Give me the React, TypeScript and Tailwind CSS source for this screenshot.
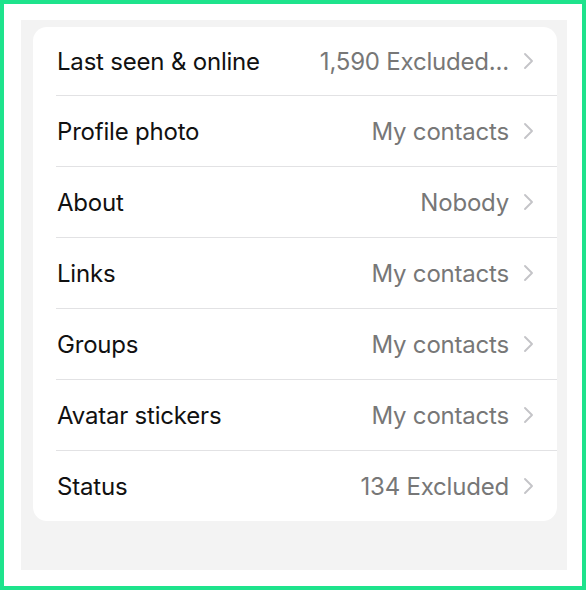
const rows: { label: string; value: string }[] = [
  { label: "Last seen & online", value: "1,590 Excluded..." },
  { label: "Profile photo", value: "My contacts" },
  { label: "About", value: "Nobody" },
  { label: "Links", value: "My contacts" },
  { label: "Groups", value: "My contacts" },
  { label: "Avatar stickers", value: "My contacts" },
  { label: "Status", value: "134 Excluded" },
];

function Chevron() {
  return (
    <svg width="12" height="18" viewBox="0 0 12 18" fill="none" className="shrink-0">
      <path d="M3 2 L10 9 L3 16" stroke="#c4c4c8" strokeWidth="1.9" strokeLinecap="round" strokeLinejoin="round" />
    </svg>
  );
}

export default function App() {
  return (
    <div className="w-[588px] h-[592px] bg-white">
      <div className="w-[586px] h-[590px] border-4 border-[#1ee38c] bg-white pt-[16px] pl-[17px]">
        <div className="w-[546px] h-[550px] bg-[#f3f3f3] pt-[7px] pl-[12px]">
          <div
            className="w-[524px] bg-white rounded-[14px] overflow-hidden"
            style={{ fontFamily: "Inter, 'Noto Sans', sans-serif" }}
          >
            {rows.map((r, i) => (
              <div key={r.label} className="pl-[23px]">
                <div
                  className={
                    "flex items-center justify-between pr-[23px] " +
                    (i === 0 ? "h-[69px] " : i === rows.length - 1 ? "h-[70px] " : "h-[71px] ") +
                    (i < rows.length - 1 ? "border-b border-[#e2e2e4]" : "")
                  }
                >
                  <span className="text-[24px] text-[#111111] tracking-[-0.2px] pl-[1px] pt-[1px]">{r.label}</span>
                  <span className="flex items-center gap-[13px]">
                    <span className="text-[24px] text-[#777777] tracking-[-0.2px] pt-[1px]">{r.value}</span>
                    <Chevron />
                  </span>
                </div>
              </div>
            ))}
          </div>
        </div>
      </div>
    </div>
  );
}
